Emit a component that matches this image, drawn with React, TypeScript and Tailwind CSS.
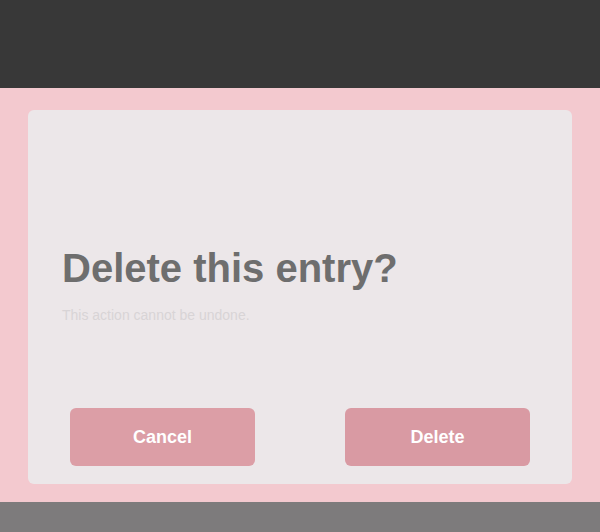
export default function App() {
  return (
    <div className="w-[600px] h-[532px] flex flex-col bg-[#f3c9cf] overflow-hidden" style={{ fontFamily: '"Liberation Sans", Arial, sans-serif' }}>
      {/* top bar */}
      <div className="h-[88px] shrink-0 bg-[#383838]" />

      {/* dialog area */}
      <div className="flex-1 px-[28px] pt-[22px] pb-[18px]">
        <div className="h-full rounded-md bg-[#ece7e9] flex flex-col px-[34px]">
          <div className="flex-1 flex flex-col justify-center pt-[50px]">
            <h2 className="text-[40px] font-bold text-[#6e6e6e] leading-tight">
              Delete this entry?
            </h2>
            <p className="mt-3 text-sm text-[#d8d4d6]">This action cannot be undone.</p>
          </div>
          <div className="flex justify-between px-[8px] pb-[18px]">
            <button className="w-[185px] h-[58px] rounded-md bg-[#dc9ea6] text-white text-lg font-semibold">
              Cancel
            </button>
            <button className="w-[185px] h-[58px] rounded-md bg-[#d99aa3] text-white text-lg font-semibold">
              Delete
            </button>
          </div>
        </div>
      </div>

      {/* bottom strip */}
      <div className="h-[30px] shrink-0 bg-[#7d7b7c]" />
    </div>
  );
}
